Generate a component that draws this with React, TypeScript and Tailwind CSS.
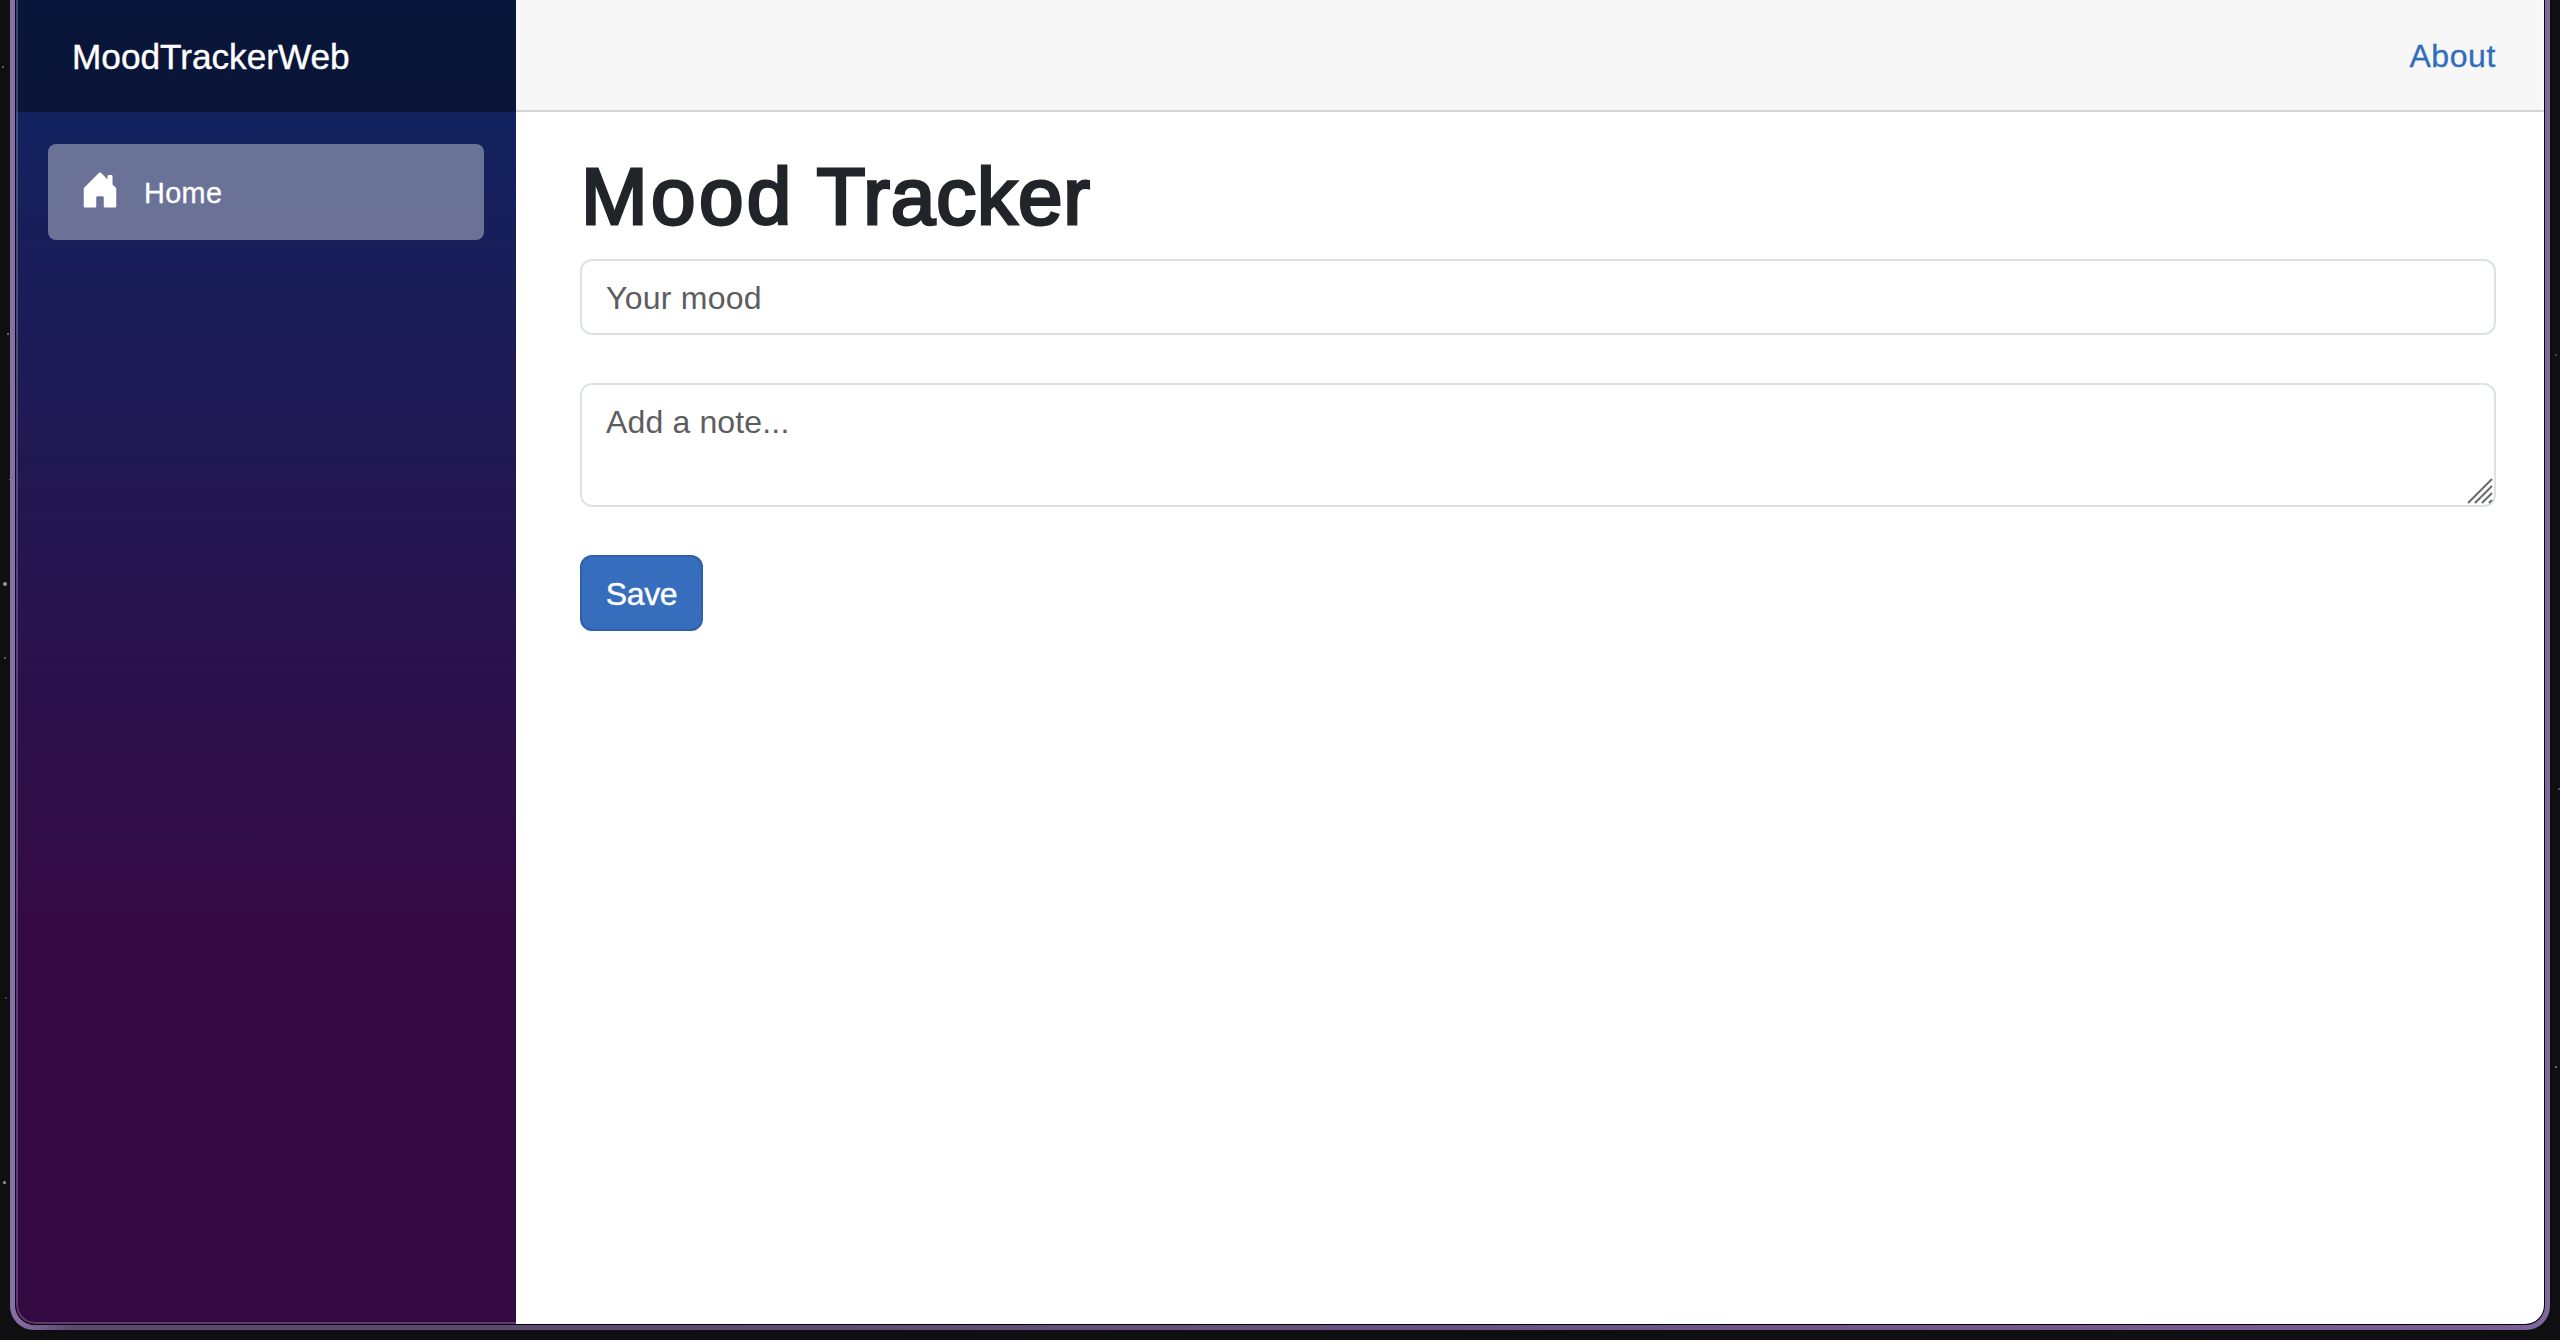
const stars: { x: number; y: number; size: number; color: string }[] = [
  { x: 2, y: 66, size: 2, color: '#77777c' },
  { x: 7, y: 333, size: 2, color: '#88888c' },
  { x: 9, y: 479, size: 1, color: '#88888c' },
  { x: 3, y: 582, size: 4, color: '#9898a0' },
  { x: 4, y: 657, size: 2, color: '#77777c' },
  { x: 5, y: 997, size: 2, color: '#50506a' },
  { x: 3, y: 1181, size: 3, color: '#98989f' },
  { x: 2555, y: 354, size: 2, color: '#55555a' },
  { x: 2558, y: 788, size: 2, color: '#66667a' },
  { x: 2555, y: 1066, size: 2, color: '#88888c' },
];

function HomeIcon() {
  return (
    <svg viewBox="0 0 16 16" className="size-10 shrink-0 fill-white" aria-hidden="true">
      <path d="M6.5 14.5v-3.505c0-.245.25-.495.5-.495h2c.25 0 .5.25.5.5v3.5a.5.5 0 0 0 .5.5h4a.5.5 0 0 0 .5-.5v-7a.5.5 0 0 0-.146-.354L13 5.793V2.5a.5.5 0 0 0-.5-.5h-1a.5.5 0 0 0-.5.5v1.293L8.354 1.146a.5.5 0 0 0-.708 0l-6 6A.5.5 0 0 0 1.5 7.5v7a.5.5 0 0 0 .5.5h4a.5.5 0 0 0 .5-.5Z" />
    </svg>
  );
}

function Sidebar() {
  return (
    <aside className="flex w-[500px] shrink-0 flex-col bg-[linear-gradient(180deg,#0d2662_0%,#350a44_70%)]">
      <div className="flex h-28 items-center bg-black/40 pt-0.5 pl-14">
        <span className="text-[35.2px] leading-none text-white [-webkit-text-stroke:0.4px_white]">MoodTrackerWeb</span>
      </div>
      <nav className="p-8">
        <a href="#" className="flex h-24 items-center rounded-lg bg-white/[0.37] pl-8 text-white">
          <span className="mb-1 flex"><HomeIcon /></span>
          <span className="mt-0.5 ml-6 text-[28.8px] leading-none tracking-[0.4px] [-webkit-text-stroke:0.3px_white]">Home</span>
        </a>
      </nav>
    </aside>
  );
}

function Main() {
  return (
    <main className="flex min-w-0 flex-1 flex-col bg-white">
      <header className="flex h-28 items-center justify-end border-b-2 border-[#d6d5d5] bg-[#f7f7f7] pt-0.5 pr-12">
        <a href="#" className="text-[32px] leading-none tracking-[0.6px] text-[#2f6dba] [-webkit-text-stroke:0.3px_#2f6dba]">About</a>
      </header>
      <article className="flex flex-col items-start pr-12 pl-16 pt-[37px]">
        <h1 className="-mb-0.5 pl-px text-[80px] leading-[96px] tracking-[0.9px] text-[#212529] [-webkit-text-stroke:3px_#212529]">
          <span className="tracking-[3.4px]">Mood</span> Tracker
        </h1>
        <input
          placeholder="Your mood"
          className="mt-4 h-[76px] w-full rounded-xl border-2 border-[#dee2e6] px-6 pt-0.5 text-[32px] tracking-[0.25px] placeholder:text-[#5c5d60]"
        />
        <div className="relative mt-12 flex w-full">
          <textarea
            placeholder="Add a note..."
            className="h-[124px] w-full resize-none rounded-xl border-2 border-[#dee2e6] px-6 pt-[13px] text-[32px] leading-[48px] tracking-[0.15px] placeholder:text-[#5c5d60]"
          />
          <svg viewBox="0 0 26 26" className="absolute right-[3.5px] bottom-[3.5px] size-[26px] fill-none stroke-[#6b6b6b] stroke-2" aria-hidden="true">
            <path d="M1 25 25 1M8 25 25 8M15 25 25 15M22 25 25 22" />
          </svg>
        </div>
        <button className="mt-12 h-[76px] w-[123px] rounded-xl border-2 border-[#2e61aa] bg-[#366dbd] pt-0.5 text-[32px] tracking-[-0.4px] text-white [-webkit-text-stroke:0.4px_white]">Save</button>
      </article>
    </main>
  );
}

export default function App() {
  return (
    <div className="relative h-[1340px] w-[2560px] overflow-hidden bg-[#0f0f12] font-['Liberation_Sans',Arial,sans-serif]">
      {stars.map((s) => (
        <i
          key={`${s.x}-${s.y}`}
          className="absolute rounded-full"
          style={{ left: s.x, top: s.y, width: s.size, height: s.size, background: s.color }}
        />
      ))}
      <div className="relative mx-[10px] h-[1330px] rounded-b-[24px] bg-[linear-gradient(90deg,#8a70a8_0,#866ba5_8px,#5c4870_60px,#5c4870_600px,#7a5c98_2500px,#8068a3_100%)] px-[5px] pb-[5px]">
        <div className="h-full rounded-b-[20px] bg-black px-px pb-px">
          <div className="relative flex h-full overflow-hidden rounded-b-[19px]">
            <Sidebar />
            <Main />
            <div className="pointer-events-none absolute inset-0 rounded-b-[19px] border-x-2 border-b-2 border-white/20" />
          </div>
        </div>
      </div>
    </div>
  );
}
